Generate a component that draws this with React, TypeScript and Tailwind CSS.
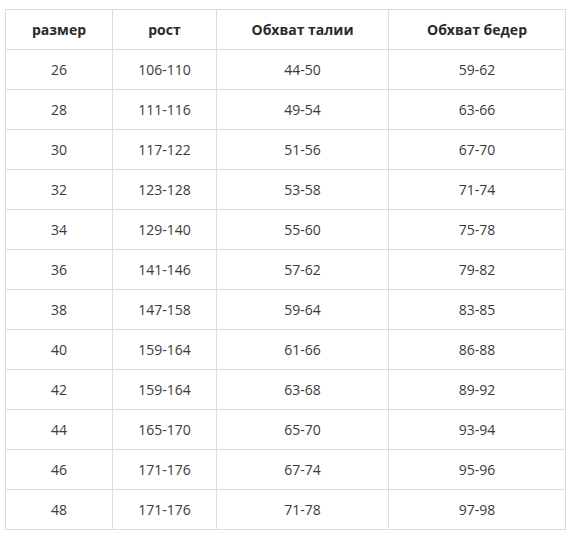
const rows: [string, string, string, string][] = [
  ['26', '106-110', '44-50', '59-62'],
  ['28', '111-116', '49-54', '63-66'],
  ['30', '117-122', '51-56', '67-70'],
  ['32', '123-128', '53-58', '71-74'],
  ['34', '129-140', '55-60', '75-78'],
  ['36', '141-146', '57-62', '79-82'],
  ['38', '147-158', '59-64', '83-85'],
  ['40', '159-164', '61-66', '86-88'],
  ['42', '159-164', '63-68', '89-92'],
  ['44', '165-170', '65-70', '93-94'],
  ['46', '171-176', '67-74', '95-96'],
  ['48', '171-176', '71-78', '97-98'],
];

const headers = ['размер', 'рост', 'Обхват талии', 'Обхват бедер'];
const widths = ['w-[107px]', 'w-[104px]', 'w-[172px]', 'w-[177px]'];

export default function App() {
  return (
    <div className="bg-white w-[575px] h-[541px] pt-[9px] pl-[5px] font-['Open_Sans',sans-serif] text-[#3a3a3a]">
      <table className="border-collapse table-fixed w-[560px] text-[14px]">
        <thead>
          <tr className="h-[40px]">
            {headers.map((h, i) => (
              <th
                key={h}
                className={`${widths[i]} border border-[#dcdcdc] text-center font-bold text-[#2a2a2a] p-0`}
              >
                {h}
              </th>
            ))}
          </tr>
        </thead>
        <tbody>
          {rows.map((r) => (
            <tr key={r[0]} className="h-[40px]">
              {r.map((c, i) => (
                <td key={i} className="border border-[#dcdcdc] text-center p-0">
                  {c}
                </td>
              ))}
            </tr>
          ))}
        </tbody>
      </table>
    </div>
  );
}
